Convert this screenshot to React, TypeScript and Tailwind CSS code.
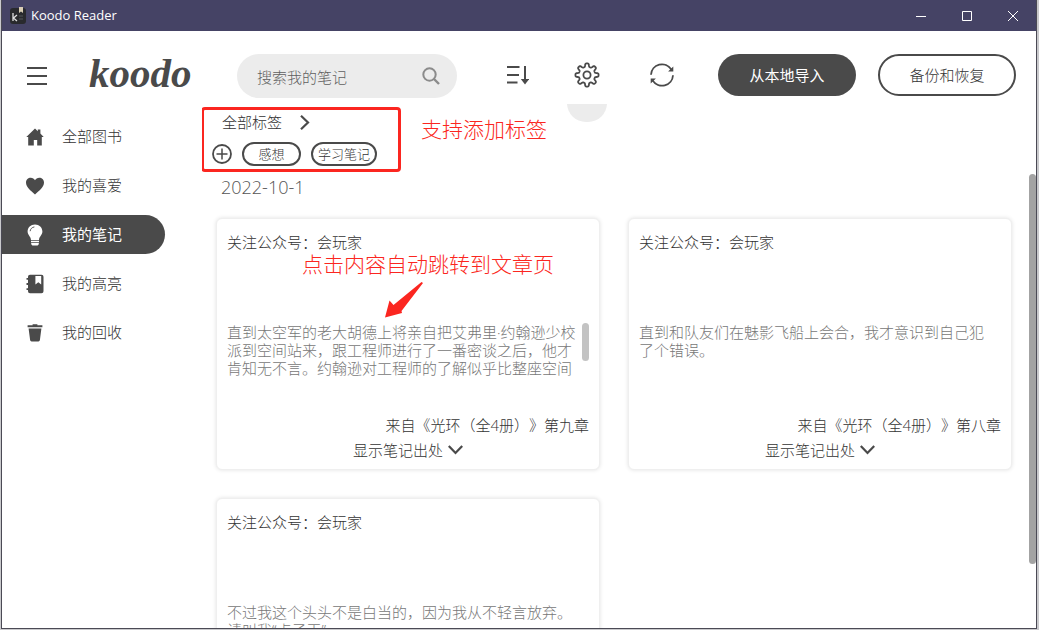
import React from "react";

type IconProps = { className?: string };

const HomeIcon = ({ className }: IconProps) => (
  <svg viewBox="0 0 18 18" className={className} fill="currentColor" aria-hidden="true">
    <path d="M9 .6 11.8 3.2V1.6h2.6v4L17.7 9h-1.9v8.4h-4.6V12H7.8v5.4H2.2V9H.3z" />
  </svg>
);

const HeartIcon = ({ className }: IconProps) => (
  <svg viewBox="0 0 18 18" className={className} fill="currentColor" aria-hidden="true">
    <path d="M9 17.4C4.6 13.6 0 10.4 0 5.6 0 2.7 2.2.8 4.7.8 6.6.8 8.200 1.700 9 3.200 9.800 1.700 11.400.8 13.300.8 15.800.8 18 2.700 18 5.600c0 4.800-4.600 8-9 11.800z" />
  </svg>
);

const BulbIcon = ({ className }: IconProps) => (
  <svg viewBox="0 0 18 22" className={className} aria-hidden="true">
    <path
      fill="currentColor"
      d="M9 .5c4.300 0 7.400 3.100 7.400 7.100 0 3.600-3.200 4.900-3.400 8.400H5C4.800 12.500 1.600 11.200 1.600 7.600 1.600 3.600 4.700.5 9 .5zM5 16.800h8v1.500H5zM5.200 19h7.600v1.200l-1.200 1.200H6.400l-1.200-1.200z"
    />
    <path fill="none" stroke="#4a4a4a" strokeWidth=".9" strokeLinecap="round" d="M4.200 6.800C4.500 4.700 6 3.300 8 3" />
  </svg>
);

const NotebookIcon = ({ className }: IconProps) => (
  <svg viewBox="0 0 18 20" className={className} fill="currentColor" aria-hidden="true">
    <path
      fillRule="evenodd"
      d="M4 .7h11.500a2 2 0 0 1 2 2v14.600a2 2 0 0 1-2 2H4a2 2 0 0 1-2-2V16H.5v-1.800H2v-3.300H.5V9.100H2V5.800H.5V4H2V2.700a2 2 0 0 1 2-2zM9.400 2v8.600l2.900-2.300 2.900 2.300V2z"
    />
  </svg>
);

const TrashIcon = ({ className }: IconProps) => (
  <svg viewBox="0 0 18 20" className={className} fill="currentColor" aria-hidden="true">
    <path d="M6.600 2.200V1.300h4.800v.9h5v2.100H1.600V2.200zM2.600 5.600h12.800l-1.500 11.500a1.500 1.500 0 0 1-1.500 1.300H5.600a1.500 1.500 0 0 1-1.500-1.300z" />
  </svg>
);

const SortIcon = () => (
  <svg viewBox="0 0 22 20" className="h-5 w-[22px]" fill="none" stroke="currentColor" strokeWidth="2" aria-hidden="true">
    <path d="M0 2h12.500M0 10h12M0 17.500h10.500M18 1v14" />
    <path fill="currentColor" stroke="none" d="M13.800 14h8.400L18 19.500z" />
  </svg>
);

const gearOutline =
  Array.from({ length: 144 }, (_, i) => {
    const angle = (i * Math.PI) / 72;
    const radius = 9.9 + 1.7 * Math.tanh(2.200 * Math.cos(8 * angle));
    return `${i ? "L" : "M"}${(13 + radius * Math.cos(angle)).toFixed(2)} ${(13 + radius * Math.sin(angle)).toFixed(2)}`;
  }).join("") + "Z";

const GearIcon = () => (
  <svg viewBox="0 0 26 26" className="size-[26px]" fill="none" stroke="currentColor" strokeWidth="1.800" strokeLinejoin="round" aria-hidden="true">
    <path d={gearOutline} />
    <circle cx="13" cy="13" r="3.600" />
  </svg>
);

const RefreshIcon = () => (
  <svg viewBox="0 0 26 26" className="size-[26px]" fill="none" stroke="currentColor" strokeWidth="1.800" aria-hidden="true">
    <path d="M2 12.800A11 11 0 0 1 22.300 7.500M24 13.200A11 11 0 0 1 3.700 18.500" />
    <path fill="currentColor" stroke="none" d="M24.300 4.500v5h-5.200zM1.700 21.500v-5h5.200z" />
  </svg>
);

const SearchIcon = () => (
  <svg viewBox="0 0 18 18" className="size-[18px]" fill="none" stroke="#8b8b8b" strokeWidth="2" aria-hidden="true">
    <circle cx="7.500" cy="7.500" r="6.200" />
    <path d="m12 12 5 5" strokeWidth="2.400" />
  </svg>
);

const AppIcon = () => (
  <svg viewBox="0 0 16 17" className="h-[17px] w-4" aria-hidden="true">
    <rect y="1" width="16" height="16" rx="3" fill="#292a2d" />
    <path d="M9 0h4v6l-2-1.500L9 6z" fill="#d9cdb5" />
    <path d="M3 6v8M7 8l-3.500 3L7 14" stroke="#e0e0e0" strokeWidth="1.300" fill="none" />
    <path d="M9 9h4M9 12h4" stroke="#55565a" />
  </svg>
);

const navItems = [
  { label: "全部图书", Icon: HomeIcon, size: "size-[18px]" },
  { label: "我的喜爱", Icon: HeartIcon, size: "size-[18px]" },
  { label: "我的笔记", Icon: BulbIcon, size: "h-[22px] w-[18px]", active: true },
  { label: "我的高亮", Icon: NotebookIcon, size: "h-5 w-[18px]" },
  { label: "我的回收", Icon: TrashIcon, size: "h-5 w-[18px]" },
];

const notes = [
  {
    text: "直到太空军的老大胡德上将亲自把艾弗里·约翰逊少校派到空间站来，跟工程师进行了一番密谈之后，他才肯知无不言。约翰逊对工程师的了解似乎比整座空间",
    chapter: "来自《光环（全4册）》第九章",
    scroll: true,
  },
  { text: "直到和队友们在魅影飞船上会合，我才意识到自己犯了个错误。", chapter: "来自《光环（全4册）》第八章" },
  { text: "不过我这个头头不是白当的，因为我从不轻言放弃。请叫我“点子王”", chapter: "来自《光环（全4册）》第八章" },
];

function TitleBar() {
  return (
    <div className="flex h-[31px] shrink-0 items-center bg-[#454365] pl-2 text-white">
      <AppIcon />
      <span className="ml-[5px] text-[13px]">Koodo Reader</span>
      <div className="ml-auto flex h-full">
        <button aria-label="最小化" className="grid w-[46px] place-items-center">
          <svg viewBox="0 0 10 10" className="size-[10px]" stroke="currentColor"><path d="M0 5.500h10" /></svg>
        </button>
        <button aria-label="最大化" className="grid w-[46px] place-items-center">
          <svg viewBox="0 0 10 10" className="size-[10px]" stroke="currentColor" fill="none"><path d="M.5.5h9v9h-9z" /></svg>
        </button>
        <button aria-label="关闭" className="grid w-[46px] place-items-center">
          <svg viewBox="0 0 10 10" className="size-[10px]" stroke="currentColor"><path d="m0 0 10 10M10 0 0 10" /></svg>
        </button>
      </div>
    </div>
  );
}

function Header() {
  return (
    <header className="flex h-[73px] shrink-0 items-center pt-[17px] pr-[20px] pl-[25px] text-[#4a4a4a]">
      <button aria-label="菜单">
        <svg viewBox="0 0 20 20" className="size-5" stroke="currentColor" strokeWidth="2"><path d="M0 2h20M0 10h20M0 18h20" /></svg>
      </button>
      <span className="ml-[42px] w-[104px] pb-[6px] font-['Liberation_Serif',serif] text-[41px] leading-10 font-bold italic">koodo</span>
      <label className="ml-[44px] flex h-11 w-[220px] items-center rounded-full bg-[#ececec] pr-[17px] pl-5">
        <input
          aria-label="搜索我的笔记"
          placeholder="搜索我的笔记"
          className="min-w-0 flex-1 bg-transparent pt-[2px] text-[15px] font-light outline-none placeholder:text-[#5f5f5f]"
        />
        <SearchIcon />
      </label>
      <div className="ml-[50px] flex items-center pb-[2px]">
        <button aria-label="排序"><SortIcon /></button>
        <button aria-label="设置" className="ml-[45px]"><GearIcon /></button>
        <button aria-label="同步" className="ml-[49px]"><RefreshIcon /></button>
      </div>
      <div className="ml-auto flex gap-[22px] pb-[2px] text-[15px]">
        <button className="h-[42px] w-[138px] rounded-full bg-[#4a4a4a] text-white">从本地导入</button>
        <button className="h-[42px] w-[138px] rounded-full border-2 border-[#4a4a4a] font-light text-[#333333]">备份和恢复</button>
      </div>
    </header>
  );
}

function NoteCard({ note }: { note: (typeof notes)[number] }) {
  return (
    <article className="flex h-[252px] flex-col rounded-md border border-[#efefef] bg-white px-[10px] pt-[13px] shadow-[0_0_4px_rgba(0,0,0,0.12)]">
      <h3 className="text-[15px] leading-5 font-light">关注公众号：会玩家</h3>
      <div className="mt-[71px] flex h-[54px] justify-between overflow-hidden">
        <p className="w-[352px] text-[15px] leading-[18px] font-light text-[#777777]">{note.text}</p>
        {note.scroll && <span className="h-[38px] w-[7px] rounded-full bg-[#c3c3c3]" />}
      </div>
      <p className="mt-[38px] text-right text-[15px] leading-5 font-light [text-spacing-trim:space-all]">{note.chapter}</p>
      <button className="mt-[5px] flex items-center gap-[5px] self-center text-[15px] leading-5 font-light">
        显示笔记出处
        <svg viewBox="0 0 15 10" className="h-[10px] w-[15px] text-[#4a4a4a]" fill="none" stroke="currentColor" strokeWidth="2.200"><path d="m.8 1 6.700 7L14.200 1" /></svg>
      </button>
    </article>
  );
}

export default function App() {
  return (
    <div className="h-screen overflow-hidden bg-[#c9c9cc] pr-[2px] pb-px pl-px font-['Open_Sans','Noto_Sans_CJK_SC',sans-serif] text-[#333333]">
      <div className="flex h-full flex-col border-r border-b border-l border-[#4b4a55] bg-white">
        <TitleBar />
        <Header />
        <div className="flex min-h-0 flex-1">
          <nav className="flex w-[200px] shrink-0 flex-col gap-[10px] pt-[13px]">
            {navItems.map(({ label, Icon, size, active }) => (
              <a
                key={label}
                href="#"
                aria-current={active ? "page" : undefined}
                className={`flex h-[39px] w-[163px] shrink-0 items-center gap-[18px] rounded-r-full pl-6 text-[15px] ${active ? "bg-[#4a4a4a] text-white" : "font-light"}`}
              >
                <span className={active ? "text-white" : "text-[#4a4a4a]"}>
                  <Icon className={size} />
                </span>
                {label}
              </a>
            ))}
          </nav>
          <main className="relative min-w-0 flex-1 overflow-hidden pt-[3px] pr-6 pl-[14px]">
            <div className="absolute -top-5 left-[365px] h-[38px] w-10 rounded-full bg-[#ececec]" />
            <section className="-ml-[15px] h-[65px] w-[200px] rounded-sm border-3 border-[#fb2620] px-2">
              <button className="ml-[10px] flex h-6 items-center gap-[18px] text-[15px] font-light">
                全部标签
                <svg viewBox="0 0 10 15" className="h-[15px] w-[10px] text-[#4a4a4a]" fill="none" stroke="currentColor" strokeWidth="2.200"><path d="m1 .8 7 6.700-7 6.700" /></svg>
              </button>
              <div className="mt-2 flex items-center gap-[10px] text-[13px] font-light">
                <button aria-label="添加标签" className="text-[#4a4a4a]">
                  <svg viewBox="0 0 20 20" className="size-5" fill="none" stroke="currentColor" strokeWidth="1.800"><circle cx="10" cy="10" r="9" /><path d="M4.500 10h11M10 4.500v11" strokeWidth="1.500" /></svg>
                </button>
                <button className="h-6 w-[59px] rounded-full border-2 border-[#4a4a4a] leading-5">感想</button>
                <button className="h-6 w-[66px] rounded-full border-2 border-[#4a4a4a] leading-5">学习笔记</button>
              </div>
            </section>
            <h2 className="mt-[3px] ml-[5px] text-[18px] leading-6 font-light text-[#555555]">2022-10-1</h2>
            <div className="mt-[19px] grid grid-cols-2 gap-7">
              {notes.map((note, i) => (
                <NoteCard key={i} note={note} />
              ))}
            </div>
            <p className="absolute top-[11px] left-[219px] text-[21px] leading-7 font-light text-[#fb2620]">支持添加标签</p>
            <p className="absolute top-[146px] left-[100px] text-[21px] leading-7 font-light text-[#fb2620]">点击内容自动跳转到文章页</p>
            <svg viewBox="0 0 38 36" className="absolute top-[178px] left-[183px] h-9 w-[38px]" fill="#fb2620" aria-hidden="true">
              <path d="M0 35.500 4.500 18.500 8.500 23 36.500 0 38 1 16.500 29 17 31z" />
            </svg>
            <div className="absolute top-[70px] right-0 h-[390px] w-[7px] rounded-full bg-[#a3a3a3]" />
          </main>
        </div>
      </div>
    </div>
  );
}
